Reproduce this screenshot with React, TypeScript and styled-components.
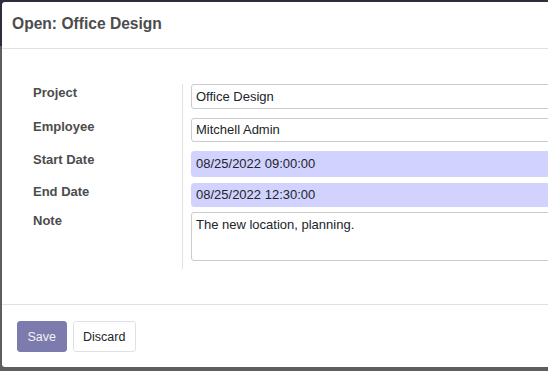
import styled, { createGlobalStyle } from "styled-components";

const GlobalStyle = createGlobalStyle`
  html, body {
    margin: 0;
    padding: 0;
    overflow: hidden;
  }
  body {
    background: linear-gradient(#2d2d3d 0 46px, #5e5e5e 46px);
    font-family: "Liberation Sans", Arial, sans-serif;
    min-height: 100vh;
  }
`;

type FieldRow = {
  label: string;
  value: string;
  height: number;
  gap: number;
  required?: boolean;
  multiline?: boolean;
};

// heights / gaps per row as measured on the dialog
const rows: FieldRow[] = [
  { label: "Project", value: "Office Design", height: 25, gap: 9 },
  { label: "Employee", value: "Mitchell Admin", height: 24, gap: 9 },
  { label: "Start Date", value: "08/25/2022 09:00:00", height: 26, gap: 6, required: true },
  { label: "End Date", value: "08/25/2022 12:30:00", height: 24, gap: 5, required: true },
  { label: "Note", value: "The new location, planning.", height: 49, gap: 8, multiline: true },
];

export default function App() {
  return (
    <>
      <GlobalStyle />
      <Backdrop>
        <Modal>
          <Header>
            <Title>Open: Office Design</Title>
          </Header>
          <Body>
            <Form>
              {rows.map((row) => (
                <Row key={row.label}>
                  <Label>{row.label}</Label>
                  <FieldCell $gap={row.gap}>
                    <Input
                      $height={row.height}
                      $required={row.required}
                      $multiline={row.multiline}
                    >
                      {row.value}
                    </Input>
                  </FieldCell>
                </Row>
              ))}
            </Form>
          </Body>
          <Footer>
            <Button $primary>Save</Button>
            <Button>Discard</Button>
          </Footer>
        </Modal>
      </Backdrop>
    </>
  );
}

const Backdrop = styled.div`
  padding: 2px 0 0 2px;
  width: 548px;
  height: 371px;
  box-sizing: border-box;
  overflow: hidden;
`;

const Modal = styled.div`
  width: 620px;
  background: #ffffff;
  border-radius: 3px 0 0 3px;
`;

const Header = styled.div`
  padding: 12px 10px 14px;
  border-bottom: 1px solid #dee2e6;
`;

const Title = styled.h4`
  margin: 0;
  font-size: 15.6px;
  line-height: 20px;
  font-weight: 700;
  color: #4c4c4c;
`;

const Body = styled.div`
  padding: 35px 0 35px 31px;
`;

const Form = styled.div`
  display: flex;
  flex-direction: column;
`;

const Row = styled.div`
  display: grid;
  grid-template-columns: 149px 1fr;
`;

const Label = styled.div`
  padding-top: 1px;
  font-size: 13px;
  font-weight: 700;
  line-height: 16px;
  color: #4c4c4c;
`;

const FieldCell = styled.div<{ $gap: number }>`
  border-left: 1px solid #e2e2e2;
  padding: 0 0 ${(p) => p.$gap}px 8px;
`;

const Input = styled.div<{ $height: number; $required?: boolean; $multiline?: boolean }>`
  box-sizing: border-box;
  height: ${(p) => p.$height}px;
  display: flex;
  align-items: ${(p) => (p.$multiline ? "flex-start" : "center")};
  padding: ${(p) => (p.$multiline ? "4px 4px" : "0 4px")};
  border: 1px solid ${(p) => (p.$required ? "#d2d2ff" : "#cccccc")};
  border-radius: 3px;
  background: ${(p) => (p.$required ? "#d2d2ff" : "#ffffff")};
  font-size: 13px;
  line-height: 16px;
  color: #212529;
`;

const Footer = styled.div`
  display: flex;
  gap: 6px;
  padding: 16px 15px 15px;
  border-top: 1px solid #dee2e6;
`;

const Button = styled.button<{ $primary?: boolean }>`
  height: 31px;
  padding: 0 9.5px;
  font-family: "Liberation Sans", Arial, sans-serif;
  font-size: 12.5px;
  border-radius: 3px;
  border: 1px solid ${(p) => (p.$primary ? "#7c7bad" : "#dee2e6")};
  background: ${(p) => (p.$primary ? "#7c7bad" : "#ffffff")};
  color: ${(p) => (p.$primary ? "#f2f2f7" : "#212529")};
  cursor: pointer;
`;
